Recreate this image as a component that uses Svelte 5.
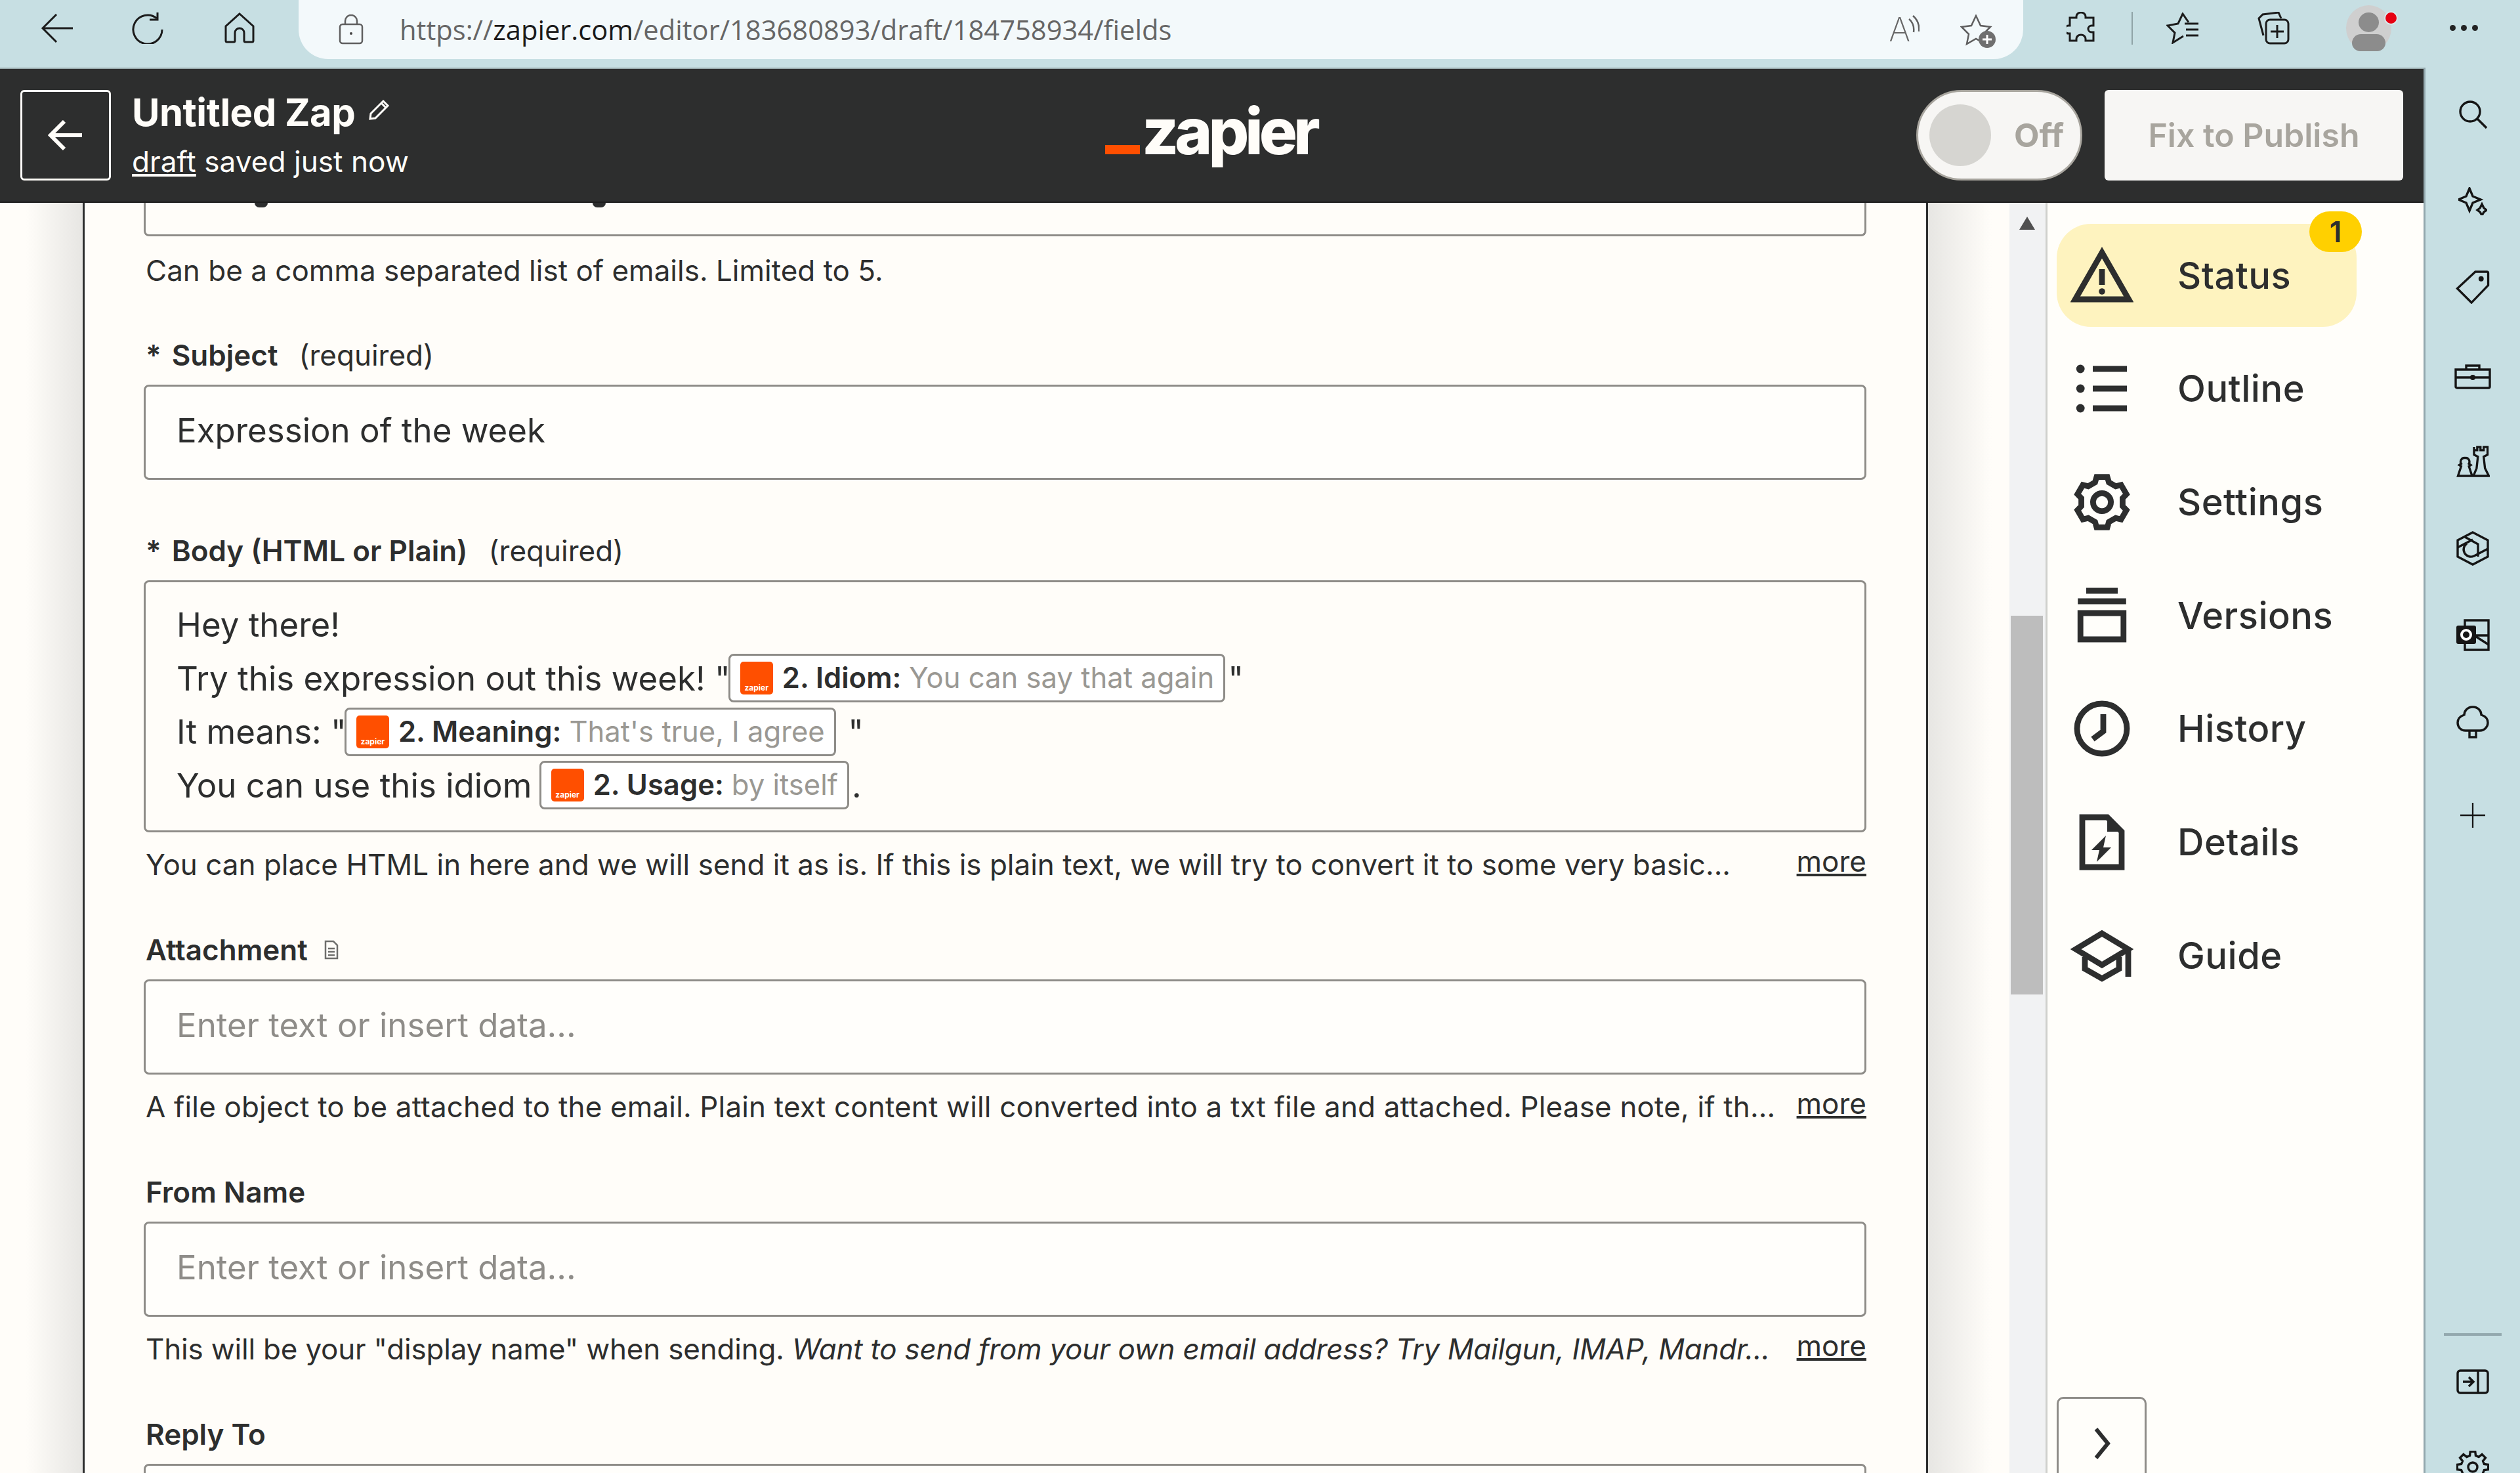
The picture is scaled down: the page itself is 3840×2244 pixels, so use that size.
<script>
  function gear(n, R, r, cx = 12, cy = 12) {
    let d = '';
    const s = (Math.PI * 2) / n;
    for (let i = 0; i < n; i++) {
      const a = i * s - Math.PI / 2;
      const pts = [
        [R, a - s * 0.2],
        [R, a + s * 0.2],
        [r, a + s * 0.32],
        [r, a + s * 0.68]
      ];
      pts.forEach(([q, t], j) => {
        const x = (cx + q * Math.cos(t)).toFixed(2);
        const y = (cy + q * Math.sin(t)).toFixed(2);
        d += (i === 0 && j === 0 ? 'M' : 'L') + x + ' ' + y + ' ';
      });
    }
    return d + 'Z';
  }
  const navGear = gear(6, 9.8, 8);
  const railGear = gear(8, 24, 18, 25, 25);
</script>

<div class="root">
  <div class="browser">
    <svg class="tb i-back" viewBox="0 0 50 44"><path d="M49 22H3M24 1 3 22l21 21"/></svg>
    <svg class="tb i-reload" viewBox="0 0 50 48"><path d="M39 9A22 22 0 1 0 47 26"/><path d="M40 0v11H28"/></svg>
    <svg class="tb i-home" viewBox="0 0 46 47"><path d="M23 2 44 21v22a2 2 0 0 1-2 2H32a2 2 0 0 1-2-2V31a7 7 0 0 0-14 0v12a2 2 0 0 1-2 2H4a2 2 0 0 1-2-2V21Z"/></svg>
    <div class="address">
      <svg class="tb gray i-lock" viewBox="0 0 38 46"><rect x="2" y="15" width="34" height="29" rx="4"/><path d="M10 15V10a9 9 0 0 1 18 0v5"/><circle cx="19" cy="29" r="2" class="fill"/></svg>
      <span class="url">https://<b>zapier.com</b>/editor/183680893/draft/184758934/fields</span>
      <span class="read-a">A</span>
      <svg class="tb gray i-read" viewBox="0 0 18 30"><path d="M2 6c6 5 8 12 7 20M8 1c7 6 10 15 9 24"/></svg>
      <svg class="tb gray i-staradd" viewBox="0 0 54 52"><path d="M24 2l7 15 15 2-11 11 3 15-14-8-14 8 3-15L2 19l15-2Z"/><circle cx="41" cy="38" r="13" class="fillgray"/><path d="M41 31v14M34 38h14" class="white"/></svg>
    </div>
    <svg class="tb i-puzzle" viewBox="0 0 45 49"><path d="M15 9V7a7 6 0 0 1 14 0v2h12v12h-3a5 5 0 0 0 0 10h3v13H29v-3a7 6 0 0 0-14 0v3H5V33H3a6 6 0 0 1 0-12h2V9Z"/></svg>
    <span class="sep"></span>
    <svg class="tb i-favs" viewBox="0 0 50 48"><path d="M34 15 25 2 18 17 2 20l11 11-3 15 16-10"/><path d="M28 17h21M30 26h19M30 35h19"/></svg>
    <svg class="tb i-coll" viewBox="0 0 49 50"><path d="M9 36 2 10 8 4l24-3 4 9"/><rect x="13" y="12" width="34" height="36" rx="6"/><path d="M30 20v20M20 30h20"/></svg>
    <div class="avatar"><i class="head"></i><i class="shoulders"></i><i class="dot"></i></div>
    <div class="dots"><i></i><i></i><i></i></div>
  </div>

  <div class="below">
    <div class="page">
      <header class="zaphead">
        <button class="back" aria-label="Back">
          <svg viewBox="0 0 54 46"><path d="M52 23H5M25 2 4 23l21 21"/></svg>
        </button>
        <div class="titles">
          <div class="title">Untitled Zap <svg class="pencil" viewBox="0 0 34 34"><path d="M4 23 23 4l7 7-19 19-8 1ZM20 7l7 7"/></svg></div>
          <div class="saved"><u>draft</u> saved just now</div>
        </div>
        <div class="logo"><i class="bar"></i><span>zapier</span></div>
        <div class="actions">
          <div class="toggle"><i class="knob"></i><span>Off</span></div>
          <div class="publish">Fix to Publish</div>
        </div>
      </header>

      <div class="workspace">
        <div class="canvas">
          <div class="panel">
            <div class="cut"><i class="desc d1"></i><i class="desc d2"></i></div>
            <div class="help first"><span>Can be a comma separated list of emails. Limited to 5.</span></div>

            <div class="label gap-s"><b><i class="star">*</i>Subject</b><span>(required)</span></div>
            <div class="input">Expression of the week</div>

            <div class="label gap-m"><b><i class="star">*</i>Body (HTML or Plain)</b><span>(required)</span></div>
            <div class="rich">
              <div>Hey there!</div>
              <div>Try this expression out this week!&nbsp;"<span class="chip"><span class="zi">zapier</span><b>2. Idiom:</b><em>You can say that again</em></span>"</div>
              <div>It means:&nbsp;"<span class="chip"><span class="zi">zapier</span><b>2. Meaning:</b><em>That's true, I agree</em></span>&nbsp;"</div>
              <div>You can use this idiom&nbsp;<span class="chip"><span class="zi">zapier</span><b>2. Usage:</b><em>by itself</em></span>.</div>
            </div>
            <div class="help"><span>You can place HTML in here and we will send it as is. If this is plain text, we will try to convert it to some very basic...</span><u>more</u></div>

            <div class="label gap-l"><b>Attachment</b><svg class="doc" viewBox="0 0 24 30"><path d="M3 2h12l6 6v20H3ZM7 13h10M7 18h10M7 23h10"/></svg></div>
            <div class="input ph">Enter text or insert data...</div>
            <div class="help"><span class="wide">A file object to be attached to the email. Plain text content will converted into a txt file and attached. Please note, if th...</span><u>more</u></div>

            <div class="label gap-l"><b>From Name</b></div>
            <div class="input ph">Enter text or insert data...</div>
            <div class="help"><span class="tight">This will be your "display name" when sending. <em>Want to send from your own email address? Try Mailgun, IMAP, Mandr...</em></span><u>more</u></div>

            <div class="label gap-l"><b>Reply To</b></div>
            <div class="input ph"></div>
          </div>
        </div>

        <div class="scrollbar">
          <svg class="up" viewBox="0 0 24 20"><path d="M12 0 24 20H0Z"/></svg>
          <i class="thumb"></i>
        </div>

        <aside class="side">
          <nav>
            <div class="item active">
              <span class="badge">1</span>
              <svg viewBox="0 0 24 24"><path d="M12 3.2 22.2 21H1.8Z"/><path d="M12 9.5v6" /><circle cx="12" cy="18" r="1.2" class="fill"/></svg>
              <span>Status</span>
            </div>
            <div class="item">
              <svg viewBox="0 0 24 24"><circle cx="3.8" cy="4.5" r="1.6" class="fill"/><circle cx="3.8" cy="12" r="1.6" class="fill"/><circle cx="3.8" cy="19.5" r="1.6" class="fill"/><path d="M8.5 4.5h13M8.5 12h13M8.5 19.5h13"/></svg>
              <span>Outline</span>
            </div>
            <div class="item">
              <svg viewBox="0 0 24 24"><path d={navGear}/><circle cx="12" cy="12" r="3.4"/></svg>
              <span>Settings</span>
            </div>
            <div class="item">
              <svg viewBox="0 0 24 24"><path d="M6 2.5h12M2.8 6.5h18.4"/><path d="M3.8 11h16.4v10H3.8Z"/></svg>
              <span>Versions</span>
            </div>
            <div class="item">
              <svg viewBox="0 0 24 24"><circle cx="12" cy="12" r="9.5"/><path d="M12.5 6.5v6.5L8.5 16"/></svg>
              <span>History</span>
            </div>
            <div class="item">
              <svg viewBox="0 0 24 24"><path d="M4.5 2.5H14L19.5 8v13.5h-15Z"/><path d="M14 2.5 19.5 8H14Z" class="fill"/><path d="M13.5 9.5 8 15h3l-1 4.5 5.5-5.5h-3Z" class="fill nostroke"/></svg>
              <span>Details</span>
            </div>
            <div class="item">
              <svg viewBox="0 0 24 24"><path d="M12 3.5 22 9.5l-10 6-10-6Z"/><path d="M5.5 12.5V17l6.5 3.7 6.5-3.7v-4.5M22 9.5V20"/></svg>
              <span>Guide</span>
            </div>
          </nav>
          <div class="expand"><svg viewBox="0 0 28 48"><path d="M4 2 22 24 4 46"/></svg></div>
        </aside>
      </div>
    </div>

    <div class="rail">
      <svg class="r r-search" viewBox="0 0 44 43"><circle cx="18" cy="17" r="15"/><path d="M29 28 43 42"/></svg>
      <svg class="r r-spark" viewBox="0 0 44 43"><path d="M17 2l5 12 12 5-12 5-5 12-5-12-12-5 12-5ZM36 26l3 6 4 3-4 3-3 5-3-5-4-3 4-3Z"/></svg>
      <svg class="r r-tag" viewBox="0 0 52 52"><path d="M30 2h18a2 2 0 0 1 2 2v19L24 50 2 28Z"/><circle cx="39" cy="13" r="4" class="fill"/></svg>
      <svg class="r r-box" viewBox="0 0 56 38"><path d="M18 8V2h20v6M2 8h52v26a2 2 0 0 1-2 2H4a2 2 0 0 1-2-2ZM2 20h52"/><circle cx="28" cy="20" r="4" class="fill"/></svg>
      <svg class="r r-chess" viewBox="0 0 52 50"><path d="M28 3v5h5V3h5v5h5V3h6v12l-6 3 2 18 6 12H27l5-12 2-18-6-3ZM14 20a6 6 0 0 1 6 9l3 2-3 2 5 15H3l5-15-3-2 3-2a6 6 0 0 1 6-9Z"/></svg>
      <svg class="r r-copilot" viewBox="0 0 52 53"><path d="M26 2 49 14v25L26 51 3 39V14Z"/><path d="M14 9 34 20v19M3 25l23-12M49 27 28 38a11 11 0 0 1-11-19"/></svg>
      <svg class="r r-outlook" viewBox="0 0 52 51"><path d="M14 3h36v45H14Z"/><path d="M28 26h22M28 26l22 14"/><rect x="1" y="11" width="30" height="28" rx="3" class="fill"/><circle cx="16" cy="25" r="7" class="ring"/></svg>
      <svg class="r r-tree" viewBox="0 0 50 50"><path d="M25 2c8 0 13 6 13 12 6 2 10 6 10 12 0 6-5 12-12 12H14C7 38 2 33 2 26c0-6 4-10 10-12 0-6 5-12 13-12Z"/><path d="M20 38v10h10V38"/></svg>
      <svg class="r r-plus" viewBox="0 0 40 40"><path d="M20 0v40M0 20h40"/></svg>
      <i class="r-line"></i>
      <svg class="r r-split" viewBox="0 0 50 38"><rect x="2" y="2" width="46" height="34" rx="4"/><path d="M33 2v34M10 19h15M19 12l7 7-7 7"/></svg>
      <svg class="r r-gear" viewBox="0 0 50 50"><path d={railGear}/><circle cx="25" cy="25" r="7"/></svg>
    </div>
  </div>
</div>

<style>
  :global(body) { margin: 0; background: #fffdf9; }
  .root {
    width: 3840px; height: 2244px; overflow: hidden; display: flex; flex-direction: column;
    font-family: Inter, "Liberation Sans", sans-serif; color: #2d2e2e; background: #c7dfe3;
  }
  svg { display: block; flex: none; fill: none; }

  /* browser toolbar */
  .browser { height: 103px; flex: none; display: flex; align-items: center; padding-bottom: 18px; box-sizing: border-box; border-bottom: 0; }
  .tb { stroke: #1b1b1b; stroke-width: 3; }
  .tb.gray { stroke: #5f5f5f; stroke-width: 2.5; }
  .fill { fill: currentColor; }
  .tb .fill { fill: #444; stroke: none; }
  .fillgray { fill: #6f6f6f; stroke: none; }
  .tb .white { stroke: #fff; stroke-width: 3; }
  .read-a { margin-left: auto; font-family: Inter, sans-serif; font-weight: 200; font-size: 50px; line-height: 60px; color: #666; }
  .i-back { width: 50px; height: 44px; margin-left: 62px; }
  .i-reload { width: 50px; height: 48px; margin-left: 88px; }
  .i-home { width: 46px; height: 47px; margin-left: 92px; }
  .address {
    align-self: flex-start; margin-left: 67px; width: 2628px; height: 90px; margin-bottom: -18px; box-sizing: border-box;
    background: #f3f9fb; border-radius: 0 0 45px 45px / 0 0 45px 45px; display: flex; align-items: center; padding: 0 42px 0 61px;
  }
  .i-lock { width: 38px; height: 46px; }
  .url { margin-left: 55px; font: 41.7px "Open Sans", sans-serif; color: #666; margin-top: -2px; }
  .url b { font-weight: 400; color: #1a1a1a; }
  .i-read { width: 18px; height: 30px; margin: -14px 0 0 -4px; }
  .i-staradd { width: 54px; height: 52px; margin-left: 62px; margin-top: 6px; }
  .i-puzzle { width: 45px; height: 49px; margin-left: 66px; }
  .sep { width: 2px; height: 50px; background: #8fa3a6; margin-left: 54px; }
  .i-favs { width: 50px; height: 48px; margin-left: 51px; }
  .i-coll { width: 49px; height: 50px; margin-left: 89px; }
  .avatar { position: relative; width: 69px; height: 70px; margin-left: 86px; border-radius: 50%; background: #cfcfcf; overflow: visible; }
  .head { position: absolute; left: 19px; top: 11px; width: 31px; height: 30px; border-radius: 50%; background: #8c8c8c; }
  .shoulders { position: absolute; left: 9px; top: 44px; width: 51px; height: 26px; border-radius: 26px 26px 24px 24px; background: #8c8c8c; }
  .dot { position: absolute; left: 58px; top: 9px; width: 21px; height: 21px; border-radius: 50%; background: #e60012; border: 2px solid #d9e9ec; box-sizing: border-box; }
  .dots { display: flex; gap: 8px; margin-left: 89px; }
  .dots i { width: 9px; height: 9px; border-radius: 50%; background: #222; }

  .below { flex: 1; display: flex; min-height: 0; border-top: 2px solid #9aabae; }
  .page { width: 3693px; flex: none; display: flex; flex-direction: column; }

  /* zap header */
  .zaphead { position: relative; height: 204px; flex: none; background: #2d2e2e; display: flex; align-items: center; padding: 0 31px; box-sizing: border-box; color: #fffdf9; border-bottom: 2px solid #1d1d1d; }
  .back { width: 138px; height: 138px; box-sizing: border-box; background: none; border: 3px solid #fffdf9; border-radius: 6px; display: flex; align-items: center; justify-content: center; padding: 0; }
  .back svg { width: 54px; height: 46px; stroke: #fffdf9; stroke-width: 6; }
  .titles { margin-left: 32px; }
  .title { font-size: 58px; font-weight: 700; line-height: 70px; display: flex; align-items: center; gap: 20px; letter-spacing: -0.5px; }
  .pencil { width: 34px; height: 34px; stroke: #fffdf9; stroke-width: 3; margin-bottom: 8px; }
  .saved { font-size: 44.2px; line-height: 60px; margin-top: 10px; }
  .logo { position: absolute; left: 1684px; top: 45px; height: 100px; display: flex; align-items: baseline; }
  .logo .bar { width: 53px; height: 14px; background: #ff4f00; margin-right: 3px; }
  .logo span { font-size: 97px; line-height: 100px; font-weight: 800; letter-spacing: -6px; color: #fffdf9; }
  .actions { margin-left: auto; display: flex; gap: 34px; margin-right: 0; }
  .toggle { width: 253px; height: 138px; box-sizing: border-box; border: 3px solid #a8a59e; border-radius: 69px; background: #f7f6f4; display: flex; align-items: center; padding-left: 17px; color: #a8a59e; font-size: 50px; font-weight: 700; }
  .knob { width: 94px; height: 94px; border-radius: 50%; background: #d6d5d1; margin-right: 35px; }
  .publish { width: 455px; height: 138px; box-sizing: border-box; background: #f7f6f4; border-radius: 6px; display: flex; align-items: center; justify-content: center; color: #a8a59e; font-size: 50px; font-weight: 600; }

  .workspace { flex: 1; display: flex; min-height: 0; background: #fffdf9; }
  .canvas { width: 3062px; flex: none; box-sizing: border-box; padding-left: 126px; overflow: hidden; background: linear-gradient(90deg, #fffdf9 40px, #e7e6e3 126px, #e7e6e3 2938px, #fffdf9 3035px); }
  .panel { width: 2812px; height: 100%; box-sizing: border-box; background: #fffdf9; border-left: 3px solid #2d2e2e; border-right: 3px solid #2d2e2e; padding: 0 91px 0 90px; overflow: hidden; }

  .cut { position: relative; height: 51px; box-sizing: border-box; border: 3px solid #8e8c88; border-top: 0; border-radius: 0 0 8px 8px; }
  .desc { position: absolute; top: 0; width: 20px; height: 7px; background: #2d2e2e; border-radius: 0 0 10px 10px; }
  .d1 { left: 166px; }
  .d2 { left: 681px; }

  .label { height: 50px; margin-bottom: 20px; display: flex; align-items: center; gap: 32px; font-size: 44px; line-height: 50px; padding-left: 3px; }
  .label b { font-weight: 600; white-space: pre; }
  .star { font-style: normal; margin-right: 16px; }
  .gap-s { margin-top: 79px; }
  .gap-m { margin-top: 83px; }
  .gap-l { margin-top: 80px; }
  .doc { width: 24px; height: 30px; stroke: #6e6e6c; stroke-width: 2.5; margin-left: -8px; }

  .input { height: 145px; box-sizing: border-box; border: 3px solid #8e8c88; border-radius: 8px; background: #fffefb; padding: 0 45px 7px 47px; display: flex; align-items: center; font-size: 51px; }
  .ph { color: #8e8c88; }
  .help { margin-top: 24px; height: 50px; display: flex; justify-content: space-between; align-items: center; padding-left: 3px; font-size: 44px; line-height: 50px; white-space: nowrap; }
  .help u { margin-top: -10px; }
  .wide { letter-spacing: 0.16px; }
  .tight { letter-spacing: -0.2px; }
  .help.first { margin-top: 27px; }
  .help em { font-style: italic; letter-spacing: -0.26px; }

  .rich { height: 384px; box-sizing: border-box; border: 3px solid #8e8c88; border-radius: 8px; padding: 24px 45px 0 47px; font-size: 51px; line-height: 81.5px; white-space: nowrap; }
  .rich > div { height: 81.5px; display: flex; align-items: center; }
  .chip { display: inline-flex; align-items: center; height: 74px; box-sizing: border-box; border: 3px solid #8e8c88; border-radius: 8px; background: #fff; padding: 0 14px 0 15px; margin: 0 4px 0 -3px; font-size: 43.6px; line-height: 60px; white-space: nowrap; }
  .chip b { font-weight: 600; margin-right: 12px; }
  .chip em { font-style: normal; color: #9a9893; }
  .zi { width: 50px; height: 50px; border-radius: 5px; background: #ff4f00; color: #fff; font-size: 12px; line-height: 14px; font-weight: 700; text-align: center; display: flex; align-items: flex-end; justify-content: center; margin-right: 14px; padding-bottom: 3px; box-sizing: border-box; }

  /* scrollbar */
  .scrollbar { width: 55px; flex: none; background: #f1f2f3; border-right: 3px solid #cfd0cc; position: relative; }
  .up { width: 24px; height: 20px; margin: 21px 0 0 15px; fill: #505050; }
  .thumb { position: absolute; left: 2px; top: 629px; width: 49px; height: 577px; background: #bdbdbd; }

  /* sidebar */
  .side { flex: 1; position: relative; padding: 32px 0 0 14px; background: #fffefa; min-width: 0; }
  nav { display: flex; flex-direction: column; gap: 15.7px; }
  .item { position: relative; width: 457px; height: 157px; box-sizing: border-box; border-radius: 52px; display: flex; align-items: center; padding-left: 21px; font-size: 56px; font-weight: 500; letter-spacing: 0.5px; }
  .item svg { width: 96px; height: 96px; stroke: #2d2e2e; stroke-width: 2.2; color: #2d2e2e; margin-right: 67px; }
  .item svg .fill { stroke: none; }
  .item svg .nostroke { stroke: none; }
  .active { background: #fef3bf; }
  .badge { position: absolute; left: 385px; top: -19px; width: 80px; height: 62px; border-radius: 31px; background: #ffd000; display: flex; align-items: center; justify-content: center; font-size: 44px; font-weight: 600; letter-spacing: 0; }
  .expand { position: absolute; left: 14px; top: 1819px; width: 137px; height: 160px; box-sizing: border-box; border: 3px solid #8e8c88; border-radius: 10px; display: flex; justify-content: center; padding-top: 44px; }
  .expand svg { width: 28px; height: 48px; stroke: #2d2e2e; stroke-width: 6; margin-left: 3px; }

  /* right rail */
  .rail { flex: 1; border-left: 3px solid #93a8ae; display: flex; flex-direction: column; align-items: center; margin-top: -2px; background: #c7dfe3; overflow: hidden; }
  .r { stroke: #151515; stroke-width: 3.4; color: #151515; }
  .r-search { width: 44px; height: 43px; margin-top: 50px; }
  .r-spark { width: 44px; height: 43px; margin-top: 89px; }
  .r-tag { width: 52px; height: 51px; margin-top: 84px; }
  .r-box { width: 56px; height: 38px; margin-top: 92px; }
  .r-chess { width: 52px; height: 49px; margin-top: 85px; }
  .r-copilot { width: 52px; height: 53px; margin-top: 82px; }
  .r-outlook { width: 52px; height: 51px; margin-top: 80px; }
  .r-tree { width: 50px; height: 50px; margin-top: 82px; }
  .r-plus { width: 38px; height: 40px; margin-top: 97px; stroke-width: 2.4; }
  .r-line { width: 88px; height: 4px; background: #93a8ae; margin-top: 769px; flex: none; }
  .r-split { width: 50px; height: 38px; margin-top: 51px; }
  .r-gear { width: 50px; height: 50px; margin-top: 86px; }
  .r .fill { stroke: none; fill: #151515; }
  .r .ring { stroke: #fff; stroke-width: 4; }
</style>
